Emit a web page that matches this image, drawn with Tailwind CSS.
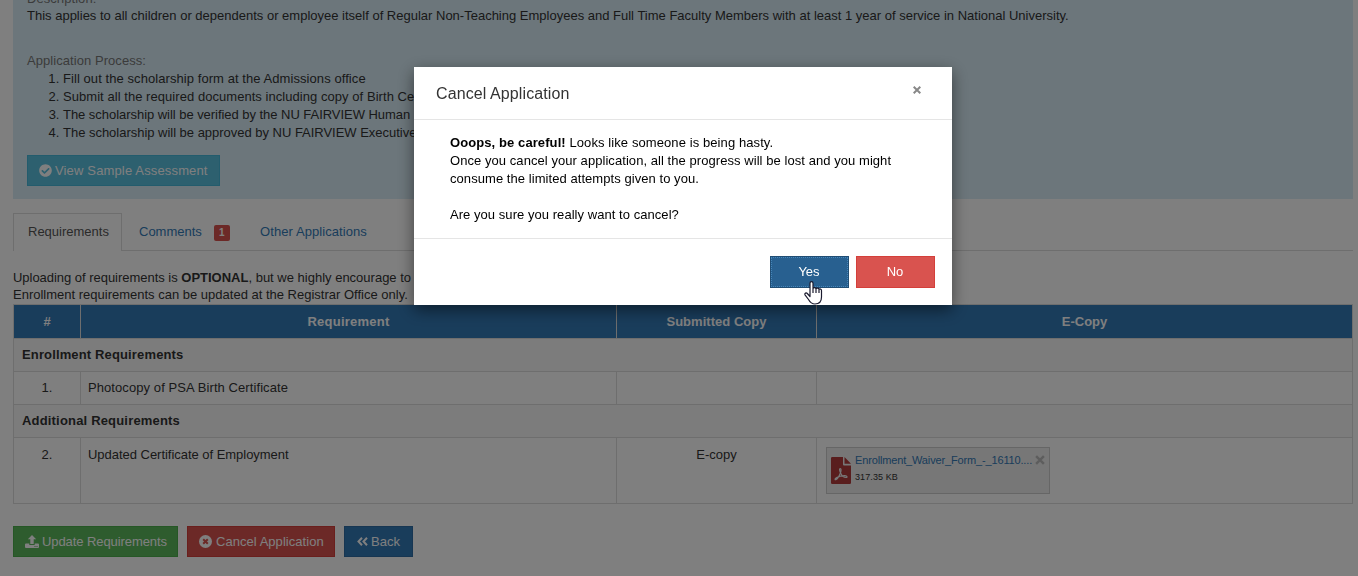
<!DOCTYPE html>
<html lang="en">
  <head>
    <meta charset="UTF-8" />
    <meta name="viewport" content="width=device-width, initial-scale=1.0" />
    <title>Scholarship Application</title>

    <script src="https://cdn.jsdelivr.net/npm/@tailwindcss/browser@4"></script>
  </head>
  <body class="bg-white h-[576px] overflow-hidden font-['Liberation_Sans',Arial,sans-serif] text-[13px] leading-[18px] text-[#333]">
    <main class="flex flex-col pl-[13px] pr-[5px] h-[576px] overflow-hidden">
      <!-- Scholarship details -->
      <section class="h-[199px] shrink-0 bg-[#d9edf7] px-[14px] flex flex-col items-start overflow-hidden">
        <p class="-mt-[10px] mb-[-1px] text-[#777] tracking-[0.06px]">Description:</p>
        <p class="whitespace-nowrap">This applies to all children or dependents or employee itself of Regular Non-Teaching Employees and Full Time Faculty Members with at least 1 year of service in National University.</p>
        <p class="mt-[27px] text-[#777] tracking-[0.06px]">Application Process:</p>
        <ol class="list-decimal pl-9">
          <li class="tracking-[0.07px]">Fill out the scholarship form at the Admissions office</li>
          <li class="tracking-[0.05px]">Submit all the required documents including copy of Birth Ce</li>
          <li class="tracking-[-0.04px]">The scholarship will be verified by the NU FAIRVIEW Human</li>
          <li class="tracking-[-0.02px]">The scholarship will be approved by NU FAIRVIEW Executive</li>
        </ol>
        <button class="mt-[13px] h-[31px] w-[193px] shrink-0 pl-[11px] flex items-center gap-[3px] bg-[#5bc0de] border border-[#46b8da] text-white tracking-[0.15px] whitespace-nowrap">
          <svg class="size-[13px]" viewBox="0 0 512 512" fill="currentColor"><path d="M504 256c0 137-111 248-248 248S8 393 8 256 119 8 256 8s248 111 248 248zM227.300 387.300l184-184c6.200-6.200 6.200-16.400 0-22.600l-22.600-22.600c-6.200-6.200-16.400-6.200-22.600 0L216 308.100l-70.100-70.100c-6.200-6.200-16.400-6.200-22.600 0l-22.600 22.600c-6.200 6.200-6.200 16.400 0 22.600l104 104c6.200 6.300 16.400 6.300 22.600.1z" /></svg>
          View Sample Assessment
        </button>
      </section>

      <!-- Tabs -->
      <nav class="mt-[14px] h-[38px] shrink-0 flex border-b border-[#ddd]">
        <a class="h-[38px] w-[109px] pt-[9px] pl-[14px] bg-white border border-b-0 border-[#ddd] text-[#555] whitespace-nowrap">Requirements</a>
        <a class="w-[121px] pt-[10px] pl-[17px] flex items-start text-[#337ab7]">
          Comments
          <span class="ml-3 mt-[2px] w-4 h-4 rounded-[2px] bg-[#d9534f] text-white text-[10px] leading-4 font-bold text-center">1</span>
        </a>
        <a class="pt-[10px] pl-[17px] text-[#337ab7] tracking-[0.08px]">Other Applications</a>
      </nav>

      <p class="mt-[18px] leading-[17px] whitespace-nowrap">
        <span class="tracking-[-0.03px]">Uploading of requirements is</span> <b>OPTIONAL</b>, but we highly encourage to<br />
        Enrollment requirements can be updated at the Registrar Office only.
      </p>

      <!-- Requirements table -->
      <table class="mt-px w-[1340px] table-fixed border-collapse shrink-0">
        <colgroup>
          <col class="w-[67px]" />
          <col class="w-[536px]" />
          <col class="w-[200px]" />
          <col class="w-[536px]" />
        </colgroup>
        <thead>
          <tr class="h-[34px] bg-[#337ab7] text-white">
            <th class="border border-[#ddd]">#</th>
            <th class="border border-[#ddd] tracking-[0.25px]">Requirement</th>
            <th class="border border-[#ddd] tracking-[0.03px]">Submitted Copy</th>
            <th class="border border-[#ddd]">E-Copy</th>
          </tr>
        </thead>
        <tbody>
          <tr class="h-[33px] bg-[#f9f9f9]">
            <td colspan="4" class="border border-[#ddd] px-2 font-bold tracking-[0.14px]">Enrollment Requirements</td>
          </tr>
          <tr class="h-[33px]">
            <td class="border border-[#ddd] text-center">1.</td>
            <td class="border border-[#ddd] px-[7px] tracking-[0.08px]">Photocopy of PSA Birth Certificate</td>
            <td class="border border-[#ddd]"></td>
            <td class="border border-[#ddd]"></td>
          </tr>
          <tr class="h-[33px] bg-[#f9f9f9]">
            <td colspan="4" class="border border-[#ddd] px-2 font-bold tracking-[0.18px]">Additional Requirements</td>
          </tr>
          <tr class="h-[66px] align-top">
            <td class="border border-[#ddd] pt-2 text-center">2.</td>
            <td class="border border-[#ddd] px-[7px] pt-2 tracking-[-0.03px]">Updated Certificate of Employment</td>
            <td class="border border-[#ddd] pt-2 text-center">E-copy</td>
            <td class="border border-[#ddd] pt-[9px] pl-[9px]">
              <div class="w-[224px] h-[47px] flex bg-[#eee] border border-[#ccc] pl-1">
                <svg class="mt-[9px] w-[20px] h-[27px] shrink-0" viewBox="0 0 20 27">
                  <path fill="#b33c3c" d="M1.200 0H12v7.500a1 1 0 0 0 1 1h7v17.300a1.200 1.200 0 0 1-1.200 1.200H1.200A1.200 1.200 0 0 1 0 25.800V1.200A1.200 1.200 0 0 1 1.200 0zM13.500 0L20 6.700h-6.500z" />
                  <path fill="none" stroke="#eee" stroke-width="1.200" stroke-linejoin="round" d="M9.300 11.500c-1.200 0-.8 2.300.4 4.800 1.300 2.700 3.300 4.200 5.200 4.200 1.800 0 1.500-1.700-1-1.800-2.700-.1-5.600.5-8.200 1.900-2.200 1.200-1.900 2.400-.9 2.100 1.800-.7 3.700-4.300 4.800-7.200.7-2.300.5-4-.3-4z" />
                </svg>
                <div class="ml-1 w-[178px] pt-[4px] text-[11px] leading-[17px]">
                  <p class="text-[#337ab7] whitespace-nowrap tracking-[-0.15px]">Enrollment_Waiver_Form_-_16110....</p>
                  <p class="text-[9px] tracking-[0.1px]">317.35 KB</p>
                </div>
                <svg class="ml-[2px] mt-[7px] size-[10px] shrink-0" viewBox="0 0 9 9"><path stroke="#bbb" stroke-width="2.200" d="M1 1l7 7M8 1l-7 7" /></svg>
              </div>
            </td>
          </tr>
        </tbody>
      </table>

      <!-- Page actions -->
      <div class="mt-[22px] flex gap-[9px] text-white">
        <button class="h-[31px] w-[165px] pl-[11px] flex items-center gap-[3px] bg-[#5cb85c] border border-[#4cae4c] whitespace-nowrap tracking-[-0.08px]">
          <svg class="w-[14px] h-[13px] -mt-px" viewBox="0 0 14 13" fill="currentColor"><path d="M7 0l4.200 4.300H8.700V9H5.300V4.300H2.800zM1 8.500h3.300V10h5.400V8.500H13a1 1 0 0 1 1 1V12a1 1 0 0 1-1 1H1a1 1 0 0 1-1-1V9.500a1 1 0 0 1 1-1zM9.500 11v1h1v-1zM11.500 11v1h1v-1z" fill-rule="evenodd" /></svg>
          Update Requirements
        </button>
        <button class="h-[31px] w-[148px] pl-[11px] flex items-center gap-1 bg-[#d9534f] border border-[#d43f3a] whitespace-nowrap tracking-[0.04px]">
          <svg class="size-[13px]" viewBox="0 0 13 13"><circle cx="6.500" cy="6.500" r="6.500" fill="currentColor" /><path stroke="#d9534f" stroke-width="2" d="M4.200 4.200l4.600 4.600M8.800 4.200l-4.600 4.600" /></svg>
          Cancel Application
        </button>
        <button class="h-[31px] w-[69px] pl-[12px] flex items-center gap-[3px] bg-[#337ab7] border border-[#2e6da4]">
          <svg class="w-[11px] h-[9px] -mt-px" viewBox="0 0 11 9" fill="none" stroke="currentColor" stroke-width="2"><path d="M5 .8L1.500 4.500 5 8.200M10 .8L6.500 4.500 10 8.200" /></svg>
          Back
        </button>
      </div>
    </main>

    <!-- Modal backdrop -->
    <div class="fixed inset-0 bg-black/50 flex items-start">
      <div class="mt-[67px] ml-[414px] w-[538px] h-[238px] bg-white shadow-[0_5px_15px_rgba(0,0,0,0.5)] text-black">
        <div class="h-[53px] pl-[22px] pr-[31px] flex items-center justify-between border-b border-[#e5e5e5]">
          <h4 class="mt-px text-[16px] text-[#333] tracking-[0.1px]">Cancel Application</h4>
          <svg class="size-[8px] -mt-[7px]" viewBox="0 0 8 8"><path stroke="#888" stroke-width="2" d="M.7.700l6.600 6.600M7.300.700L.7 7.300" /></svg>
        </div>
        <div class="h-[119px] pt-[14px] px-9 border-b border-[#e5e5e5]">
          <p class="tracking-[0.09px]"><b>Ooops, be careful!</b> Looks like someone is being hasty.</p>
          <p class="tracking-[0.06px]">Once you cancel your application, all the progress will be lost and you might<br />consume the limited attempts given to you.</p>
          <p class="mt-[18px] tracking-[0.05px]">Are you sure you really want to cancel?</p>
        </div>
        <div class="pt-[17px] pr-[17px] flex justify-end gap-[7px] text-white">
          <button class="relative w-[79px] h-8 bg-[#286090] border border-[#204d74] outline-1 outline-dotted outline-[#4585b8] -outline-offset-2 pr-px">
            Yes
            <!-- Pointer -->
            <svg class="absolute left-[33px] top-[24px] w-[19px] h-[24px]" viewBox="0 0 19 24" fill="#fff" stroke="#1a1a2e" stroke-width="1.200" stroke-linejoin="round"><path d="M6 15.500V2.200a1.500 1.500 0 0 1 3 0V7.500c.4-1.200 2.700-1.100 3 .3.500-1 2.700-.8 3 .7.700-.9 2.500-.6 2.500 1V16c0 4.500-2.500 7-6.500 7-3.600 0-5-1.700-6.500-4.500L1 13.800c-.6-1.500 1.200-2.500 2.300-1.300zM9 7.500v4.500M12 8v4M15 8.700V12" /></svg>
          </button>
          <button class="w-[79px] h-8 bg-[#d9534f] border border-[#d43f3a] pr-px">No</button>
        </div>
      </div>
    </div>
  </body>
</html>
